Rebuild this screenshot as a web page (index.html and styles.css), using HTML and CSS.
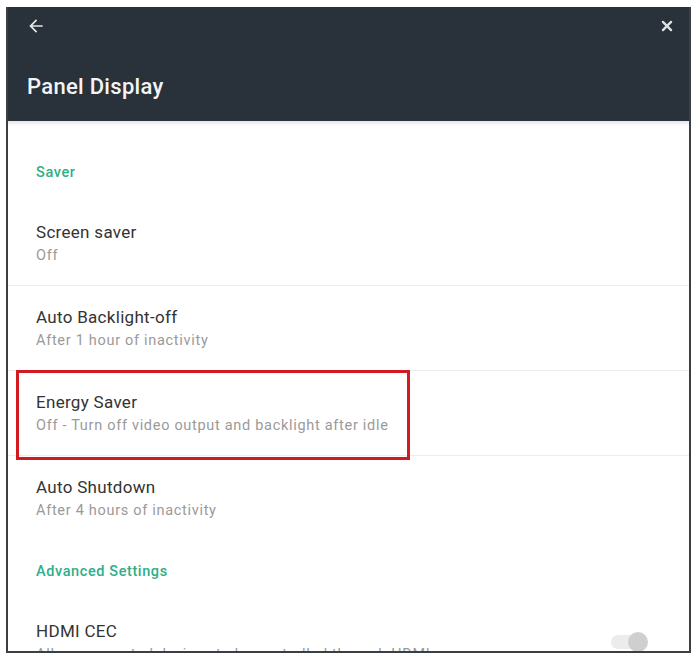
FILE: index.html
```html
<!DOCTYPE html>
<html lang="en">
<head>
<meta charset="utf-8">
<title>Panel Display</title>
<link rel="stylesheet" href="styles.css">
</head>
<body>
<div class="dialog">
  <header class="appbar">
    <div class="appbar-actions">
      <button class="icon-btn" aria-label="Back">
        <svg viewBox="0 0 24 24" width="20" height="20"><path d="M20 11H7.83l5.59-5.59L12 4l-8 8 8 8 1.41-1.41L7.83 13H20v-2z" fill="currentColor"/></svg>
      </button>
      <button class="icon-btn close" aria-label="Close">
        <svg viewBox="0 0 24 24" width="14" height="14"><path d="M5 5L19 19M19 5L5 19" stroke="currentColor" stroke-width="4" stroke-linecap="round"/></svg>
      </button>
    </div>
    <h1 class="appbar-title">Panel Display</h1>
  </header>

  <div class="list">
    <div class="section-label">Saver</div>

    <div class="item">
      <div class="item-title">Screen saver</div>
      <div class="item-sub">Off</div>
    </div>
    <div class="item">
      <div class="item-title">Auto Backlight-off</div>
      <div class="item-sub">After 1 hour of inactivity</div>
    </div>
    <div class="item highlighted">
      <div class="item-title">Energy Saver</div>
      <div class="item-sub">Off - Turn off video output and backlight after idle</div>
    </div>
    <div class="item last">
      <div class="item-title">Auto Shutdown</div>
      <div class="item-sub">After 4 hours of inactivity</div>
    </div>

    <div class="section-label">Advanced Settings</div>

    <div class="item with-switch">
      <div class="item-text">
        <div class="item-title">HDMI CEC</div>
        <div class="item-sub">Allow connected devices to be controlled through HDMI</div>
      </div>
      <span class="switch" role="switch" aria-checked="false"><span class="thumb"></span></span>
    </div>
  </div>
</div>
</body>
</html>
```

FILE: styles.css
```css
* { box-sizing: border-box; }

html, body {
  margin: 0;
  padding: 0;
  background: #ffffff;
}

body {
  padding: 7px 2px 0 6px;
  font-family: Roboto, "Noto Sans", "Liberation Sans", sans-serif;
}

.dialog {
  width: 685px;
  height: 646px;
  border: 2px solid #3b3e42;
  border-top: 0;
  background: #ffffff;
  overflow: hidden;
  display: flex;
  flex-direction: column;
}

/* dark app bar with back / close and the page title */
.appbar {
  background: #29313a;
  color: #f2f2f2;
  height: 114px;
  margin: 0 -2px;
  padding: 9px 14px 0 20px;
  box-shadow: 0 2px 4px rgba(0, 0, 0, 0.12);
  position: relative;
  z-index: 1;
  flex: none;
}

.appbar-actions {
  display: flex;
  justify-content: space-between;
  align-items: center;
  height: 20px;
}

.icon-btn {
  border: 0;
  background: none;
  color: #e4e6e8;
  padding: 0;
  display: flex;
  width: 20px;
  height: 20px;
  align-items: center;
  justify-content: center;
}

.icon-btn.close { color: #dfe2e4; }

.appbar-title {
  margin: 37px 0 0 1px;
  font-size: 22px;
  font-weight: 500;
  letter-spacing: 0.3px;
  line-height: 28px;
  color: #f4f4f4;
}

/* settings list */
.list {
  padding-top: 21px;
  flex: 1;
}

.section-label {
  height: 59px;
  padding: 22px 0 0 28px;
  font-size: 14.5px;
  font-weight: 500;
  letter-spacing: 0.6px;
  line-height: 18px;
  color: #2fae88;
}

.item {
  height: 85px;
  padding: 21px 0 0 28px;
  border-bottom: 1px solid #ececec;
}

.item.last { border-bottom: 0; }

.item-title {
  font-size: 17px;
  letter-spacing: 0.3px;
  line-height: 20px;
  color: #333333;
}

.item-sub {
  margin-top: 5px;
  font-size: 14.5px;
  letter-spacing: 0.7px;
  line-height: 18px;
  color: #9a9a9a;
}

/* outlined row */
.item.highlighted {
  position: relative;
}

.item.highlighted::after {
  content: "";
  position: absolute;
  left: 8px;
  top: -1px;
  width: 388px;
  height: 84px;
  border: 3px solid #d11a22;
}

.item.with-switch {
  display: flex;
  align-items: flex-start;
  justify-content: space-between;
  border-bottom: 0;
  padding-right: 44px;
}

.switch {
  margin-top: 14px;
  width: 34px;
  height: 14px;
  border-radius: 7px;
  background: #ececec;
  position: relative;
  flex: none;
}

.switch .thumb {
  position: absolute;
  right: -3px;
  top: -3px;
  width: 20px;
  height: 20px;
  border-radius: 50%;
  background: #cfcfcf;
}
```
